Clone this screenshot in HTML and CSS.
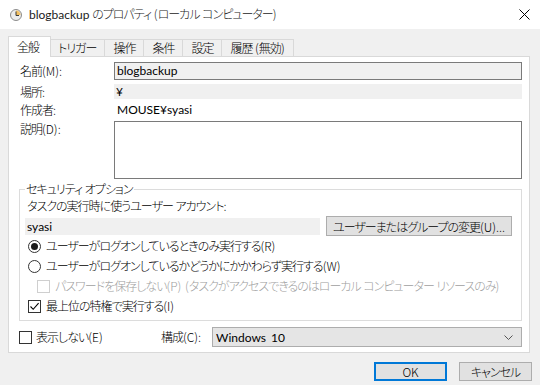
FILE: index.html
```html
<!DOCTYPE html>
<html lang="ja">
  <head>
    <meta charset="UTF-8" />
    <title>blogbackup のプロパティ</title>
    <link rel="stylesheet" href="styles.css">
  </head>
  <body>
    <div class="window">
      <div class="titlebar">
        <svg class="app-icon" width="12" height="12" viewBox="0 0 12 12">
          <circle cx="6" cy="6" r="5.5" fill="#ececec" stroke="#8c8c8c" />
          <path d="M6 6V1.5A4.5 4.5 0 0 1 10.5 6Z" fill="#f2c063" />
          <path d="M6 2.5V6.5H9" stroke="#3a3a3a" fill="none" />
        </svg>
        <span class="title"><span class="latin">blogbackup</span> のプロパティ <span class="acc">(</span>ローカル コンピューター<span class="acc">)</span></span>
        <svg class="close" width="11" height="11" viewBox="0 0 11 11">
          <path d="M0.5 0.5L10.5 10.5M10.5 0.5L0.5 10.5" stroke="#000" stroke-width="1" />
        </svg>
      </div>

      <div class="tabs">
        <div class="tab active">全般</div>
        <div class="tab">トリガー</div>
        <div class="tab">操作</div>
        <div class="tab">条件</div>
        <div class="tab">設定</div>
        <div class="tab">履歴 <span class="acc">(</span>無効<span class="acc">)</span></div>
      </div>

      <div class="panel">
        <div class="info">
          <div class="label">名前<span class="acc">(M):</span></div>
          <div class="field boxed">blogbackup</div>
          <div class="label">場所<span class="acc">:</span></div>
          <div class="field flat">¥</div>
          <div class="label">作成者<span class="acc">:</span></div>
          <div class="field plain">MOUSE¥syasi</div>
          <div class="label">説明<span class="acc">(D):</span></div>
          <div class="textarea"></div>
        </div>

        <fieldset class="security">
          <legend>セキュリティ オプション</legend>
          <div class="caption">タスクの実行時に使うユーザー アカウント<span class="acc">:</span></div>
          <div class="account-row">
            <div class="field flat account">syasi</div>
            <button class="btn change">ユーザーまたはグループの変更<span class="acc">(U)...</span></button>
          </div>
          <div class="option"><span class="radio checked"></span>ユーザーがログオンしているときのみ実行する<span class="acc">(R)</span></div>
          <div class="option"><span class="radio"></span>ユーザーがログオンしているかどうかにかかわらず実行する<span class="acc">(W)</span></div>
          <div class="option sub disabled"><span class="check"></span>パスワードを保存しない<span class="acc">(P) (</span>タスクがアクセスできるのはローカル コンピューター リソースのみ<span class="acc">)</span></div>
          <div class="option">
            <span class="check">
              <svg width="11" height="11" viewBox="0 0 11 11"><path d="M1.5 5.5L4.2 8.3L9.6 2.2" stroke="#000" stroke-width="1.1" fill="none" /></svg>
            </span>最上位の特権で実行する<span class="acc">(I)</span>
          </div>
        </fieldset>

        <div class="bottom-row">
          <div class="option hide"><span class="check"></span>表示しない<span class="acc">(E)</span></div>
          <div class="label config">構成<span class="acc">(C):</span></div>
          <div class="combo">
            <span>Windows 10</span>
            <svg width="9" height="5" viewBox="0 0 9 5"><path d="M0.5 0.5L4.5 4.5L8.5 0.5" stroke="#555" fill="none" /></svg>
          </div>
        </div>
      </div>

      <div class="actions">
        <button class="btn dialog default">OK</button>
        <button class="btn dialog">キャンセル</button>
      </div>
    </div>
  </body>
</html>
```

FILE: styles.css
```css
body {
  margin: 0;
  font-family: 'Noto Sans CJK JP', 'Noto Sans', sans-serif;
  font-size: 12px;
  font-weight: 300;
  font-feature-settings: 'palt';
  letter-spacing: -1px;
  word-spacing: 1px;
  color: #000;
  background-color: #f0f0f0;
}

.acc {
  letter-spacing: 0;
}

.latin {
  font-family: Lato, sans-serif;
  font-weight: 400;
  letter-spacing: 0;
}

.window {
  width: 540px;
  height: 385px;
  background-color: #f0f0f0;
}

.titlebar {
  height: 29px;
  background: white;
  display: flex;
  align-items: center;
  padding: 0 10px;
}

.app-icon {
  margin-right: 7px;
}

.title {
  flex: 1;
  line-height: 14px;
  color: #1b1b1b;
}

.tabs {
  display: flex;
  align-items: flex-end;
  padding: 7px 0 0 8px;
}

.tab {
  height: 16px;
  line-height: 16px;
  padding: 0 8px;
  border: 1px solid #d9d9d9;
  border-bottom: none;
  margin-left: -1px;
  background-color: #f0f0f0;
  white-space: nowrap;
}

.tab.active {
  height: 20px;
  line-height: 19px;
  margin-left: 0;
  margin-right: -1px;
  margin-bottom: -1px;
  padding: 0 11px 0 8px;
  background: white;
  position: relative;
  z-index: 1;
}

.panel {
  margin: 0 10px 0 8px;
  background: white;
  border: 1px solid #d9d9d9;
  padding: 5px 7px 5px 10px;
}

.info {
  display: grid;
  grid-template-columns: 95px 1fr;
  grid-template-rows: 18px 15px 14px 58px;
  row-gap: 4px;
}

.label {
  padding-left: 1px;
  line-height: 14px;
  align-self: center;
  white-space: nowrap;
}

.info .label:nth-last-child(2) {
  align-self: start;
  padding-top: 1px;
}

.field {
  font-family: Lato, 'Noto Sans CJK JP', sans-serif;
  font-weight: 400;
  line-height: 15px;
  white-space: nowrap;
  letter-spacing: 0;
}

.field.boxed {
  border: 1px solid #7a7a7a;
  background-color: #f0f0f0;
  padding-left: 2px;
  line-height: 16px;
}

.field.flat {
  background-color: #f0f0f0;
  padding-left: 2px;
}

.field.plain {
  padding-left: 3px;
  line-height: 14px;
}

.textarea {
  border: 1px solid #7a7a7a;
  background: white;
}

.security {
  margin: 3px 0 0;
  padding: 0 9px 4px 5px;
  border: 1px solid #dcdcdc;
  min-width: 0;
}

.security legend {
  padding: 0 1px;
  line-height: 14px;
}

.caption {
  margin-top: 3px;
  padding-left: 2px;
  line-height: 14px;
}

.account-row {
  display: flex;
  justify-content: space-between;
  align-items: center;
  height: 20px;
  margin-top: 3px;
}

.account {
  width: 293px;
  height: 17px;
  line-height: 17px;
}

.btn {
  font-family: inherit;
  font-size: 12px;
  font-weight: inherit;
  font-feature-settings: 'palt';
  letter-spacing: -1px;
  background-color: #e1e1e1;
  border: 1px solid #adadad;
  padding: 0;
  color: #000;
  white-space: nowrap;
}

.btn.change {
  width: 186px;
  height: 20px;
}

.option {
  display: flex;
  align-items: center;
  height: 20px;
  line-height: 14px;
  white-space: pre;
  padding-left: 3px;
}

.option.sub {
  padding-left: 12px;
}

.option.disabled {
  color: #a0a0a0;
}

.radio {
  width: 11px;
  height: 11px;
  border: 1px solid #333;
  border-radius: 50%;
  margin-right: 5px;
  display: flex;
  align-items: center;
  justify-content: center;
  flex-shrink: 0;
}

.radio.checked::after {
  content: '';
  width: 7px;
  height: 7px;
  border-radius: 50%;
  background: #1a1a1a;
}

.check {
  width: 11px;
  height: 11px;
  border: 1px solid #333;
  margin-right: 5px;
  display: flex;
  align-items: center;
  justify-content: center;
  flex-shrink: 0;
}

.disabled .check {
  border-color: #cfcfcf;
}

.bottom-row {
  display: flex;
  align-items: center;
  height: 20px;
  margin-top: 6px;
}

.bottom-row .hide {
  width: 142px;
  padding-left: 0;
}

.bottom-row .hide .check {
  margin-right: 4px;
}

.config {
  width: 51px;
  padding-left: 0;
}

.combo {
  flex: 1;
  height: 18px;
  border: 1px solid #adadad;
  background-color: #e5e5e5;
  display: flex;
  align-items: center;
  justify-content: space-between;
  padding: 0 8px 0 3px;
  font-family: Lato, sans-serif;
  font-weight: 400;
  letter-spacing: 0;
  word-spacing: 2px;
}

.actions {
  display: flex;
  justify-content: flex-end;
  gap: 12px;
  padding: 9px 8px 0 0;
}

.btn.dialog {
  width: 73px;
  height: 19px;
  line-height: 15px;
}

.btn.default {
  border: 2px solid #0078d7;
  letter-spacing: 0;
}
```
